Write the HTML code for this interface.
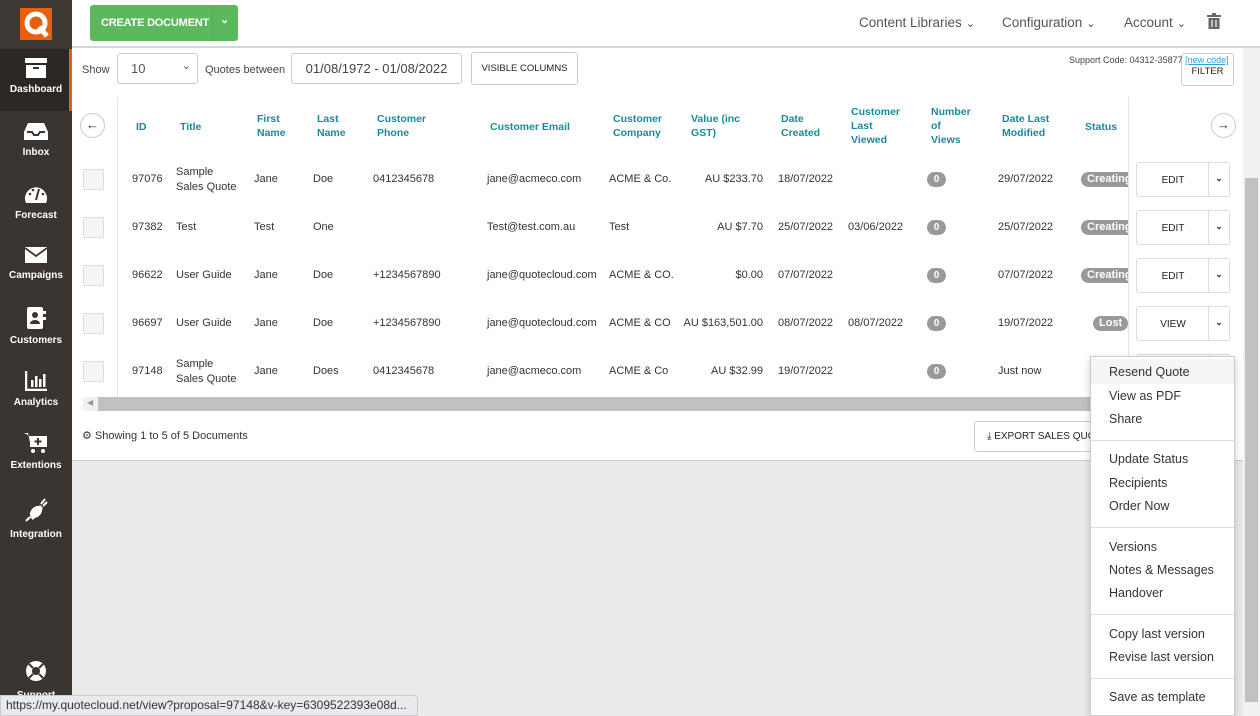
<!DOCTYPE html><html><head><meta charset="utf-8"><style>
*{box-sizing:border-box;margin:0;padding:0}
body{width:1260px;height:716px;overflow:hidden;background:#ebebeb;font-family:"Liberation Sans",sans-serif;font-size:11px;color:#333;position:relative}
.a{position:absolute;white-space:nowrap}
#side{position:absolute;left:0;top:0;width:72px;height:716px;background:#3a3531}
.nav{position:absolute;left:0;width:72px;text-align:center;color:#fff;font-size:10px;font-weight:bold}
.nav svg{display:block;margin:0 auto 6px}
#top{position:absolute;left:72px;top:0;width:1188px;height:48px;background:#fff;border-bottom:2px solid #d5d5d5}
#panel{position:absolute;left:72px;top:48px;width:1171px;height:413px;background:#fff;border-bottom:1px solid #ccc}
.h{color:#1a8a9a;font-weight:bold;font-size:10.5px;line-height:14px}
.cb{position:absolute;left:83px;width:21px;height:21px;border:1px solid #ddd;background:#f5f5f5;border-radius:2px}
.badge{position:absolute;width:19px;height:15px;border-radius:8px;background:#999;color:#fff;font-weight:bold;font-size:10px;text-align:center;line-height:15px}
.st{position:absolute;height:15px;border-radius:8px;background:#999;color:#fff;font-weight:bold;font-size:11px;line-height:15px;padding:0 6px}
.btn{position:absolute;left:1136px;width:94px;height:35px;border:1px solid #ddd;border-radius:3px;background:#fff}
.btn span{position:absolute;left:0;width:72px;top:10px;text-align:center;font-size:10px;color:#222}
.btn i{position:absolute;left:71px;top:0;width:1px;height:33px;background:#ddd}
.btn b{position:absolute;left:72px;width:20px;top:8px;text-align:center;font-size:9px}
.menu{position:absolute;left:1090px;top:356px;width:145px;height:360px;background:#fff;border:1px solid #ccc;box-shadow:0 3px 8px rgba(0,0,0,.2);font-size:12.5px;color:#333}
.menu div{position:absolute;left:18px}
.menu hr{position:absolute;left:0;width:143px;border:0;border-top:1px solid #ddd}
</style></head><body>
<div id="side">
<div class="a" style="left:0;top:0;width:72px;height:48px;background:#3e3935"></div>
<div class="a" style="left:20px;top:8px;width:32px;height:32px;background:#e8600c"></div>
<svg class="a" style="left:20px;top:8px" width="32" height="32"><circle cx="16" cy="15" r="9" fill="none" stroke="#fff" stroke-width="5"/><path d="M19 19 L27 28" stroke="#fff" stroke-width="5"/></svg>
<div class="a" style="left:0;top:49px;width:72px;height:62px;background:#2b2725;border-right:3px solid #e8600c"></div>
<div class="nav" style="top:58px"><svg width="22" height="20"><rect x="0" y="0" width="22" height="5" fill="#fff"/><rect x="1" y="7" width="20" height="13" fill="#fff"/><rect x="8" y="9" width="6" height="2" fill="#333"/></svg>Dashboard</div>
<div class="nav" style="top:121px"><svg width="24" height="20"><path d="M4 2h16l4 9v8H0v-8z" fill="#fff"/><path d="M3 11h5l2 3h4l2-3h5" stroke="#3a3531" stroke-width="2" fill="none"/></svg>Inbox</div>
<div class="nav" style="top:184px"><svg width="24" height="20"><path d="M2 19A11 11 0 1 1 22 19z" fill="#fff"/><path d="M12 16L15 5" stroke="#3a3531" stroke-width="2"/><circle cx="6" cy="10" r="1.3" fill="#3a3531"/><circle cx="9" cy="6" r="1.3" fill="#3a3531"/><circle cx="19" cy="10" r="1.3" fill="#3a3531"/></svg>Forecast</div>
<div class="nav" style="top:246px"><svg width="22" height="18"><rect x="0" y="1" width="22" height="16" fill="#fff"/><path d="M0 2l11 8 11-8" stroke="#3a3531" stroke-width="1.8" fill="none"/></svg>Campaigns</div>
<div class="nav" style="top:307px"><svg width="20" height="22"><rect x="1" y="0" width="16" height="22" rx="2" fill="#fff"/><rect x="17" y="4" width="3" height="3" fill="#fff"/><rect x="17" y="10" width="3" height="3" fill="#fff"/><circle cx="9" cy="8" r="3" fill="#3a3531"/><path d="M4 17a5 4 0 0 1 10 0z" fill="#3a3531"/></svg>Customers</div>
<div class="nav" style="top:371px"><svg width="22" height="20"><path d="M1 0v19h21" stroke="#fff" stroke-width="2.5" fill="none"/><rect x="6" y="9" width="2.5" height="7" fill="#fff"/><rect x="10" y="5" width="2.5" height="11" fill="#fff"/><rect x="14" y="8" width="2.5" height="8" fill="#fff"/><rect x="18" y="3" width="2.5" height="13" fill="#fff"/></svg>Analytics</div>
<div class="nav" style="top:432px"><svg width="24" height="22"><path d="M0 1h4l3 14h14l2-11H6" fill="#fff"/><rect x="6" y="4" width="17" height="11" fill="#fff"/><circle cx="9" cy="19" r="2" fill="#fff"/><circle cx="19" cy="19" r="2" fill="#fff"/><path d="M14 6v7M10.5 9.5h7" stroke="#3a3531" stroke-width="2"/></svg>Extentions</div>
<div class="nav" style="top:497px"><svg width="24" height="26"><path d="M6 20L16 8l3 3-10 12z" fill="#fff"/><ellipse cx="12" cy="15" rx="7" ry="5" transform="rotate(-45 12 15)" fill="#fff"/><path d="M17 7l4-5M19 9l4-4M6 20l-4 4" stroke="#fff" stroke-width="2"/></svg>Integration</div>
<svg class="a" style="left:25px;top:660px" width="22" height="22"><circle cx="11" cy="11" r="10" fill="#fff"/><circle cx="11" cy="11" r="4" fill="#3a3531"/><path d="M4 4l4 4M18 4l-4 4M4 18l4-4M18 18l-4-4" stroke="#3a3531" stroke-width="2"/></svg>
<div class="nav" style="top:690px">Support</div>
</div>
<div id="top">
<div class="a" style="left:18px;top:5px;width:148px;height:36px;background:#5cb85c;border-radius:3px;color:#fff;font-weight:bold;font-size:11px;line-height:36px;padding-left:11px;letter-spacing:-.2px">CREATE DOCUMENT</div>
<div class="a" style="left:140px;top:5px;width:1px;height:36px;background:#53a853"></div>
<div class="a" style="left:148px;top:13px;color:#fff;font-size:11px;font-weight:bold">&#8964;</div>
<div class="a" style="left:787px;top:15px;font-size:13.5px;color:#555">Content Libraries <small>&#8964;</small></div>
<div class="a" style="left:930px;top:15px;font-size:13.5px;color:#555">Configuration <small>&#8964;</small></div>
<div class="a" style="left:1052px;top:15px;font-size:13.5px;color:#555">Account <small>&#8964;</small></div>
<svg class="a" style="left:1135px;top:13px" width="14" height="16"><rect x="0" y="2" width="14" height="2" fill="#666"/><rect x="5" y="0" width="4" height="2" fill="#666"/><rect x="1.5" y="5" width="11" height="11" fill="#666"/><path d="M5 7v7M9 7v7" stroke="#fff" stroke-width="1.2"/></svg>
</div>
<div id="panel"></div>
<div class="a" style="left:82px;top:64px;color:#444">Show</div>
<div class="a" style="left:117px;top:53px;width:81px;height:31px;border:1px solid #ccc;border-radius:3px;font-size:13px;color:#555;padding:7px 0 0 13px">10<span style="position:absolute;right:6px;top:5px;font-size:11px">&#8964;</span></div>
<div class="a" style="left:205px;top:64px;color:#444">Quotes between</div>
<div class="a" style="left:291px;top:53px;width:171px;height:31px;border:1px solid #ccc;border-radius:3px;font-size:13px;color:#444;text-align:center;line-height:29px">01/08/1972 - 01/08/2022</div>
<div class="a" style="left:471px;top:52px;width:107px;height:33px;border:1px solid #ccc;border-radius:3px;font-size:9.5px;color:#222;text-align:center;line-height:31px">VISIBLE COLUMNS</div>
<div class="a" style="left:1181px;top:53px;width:53px;height:33px;border:1px solid #ccc;border-radius:3px;font-size:9.5px;color:#222;text-align:center;padding-top:12px">FILTER</div>
<div class="a" style="left:1069px;top:55px;font-size:9px;color:#444">Support Code: 04312-35877 <span style="color:#2aa3d8;text-decoration:underline">[new code]</span></div>
<div class="a" style="left:117px;top:97px;width:1px;height:300px;background:#e5e5e5"></div>
<div class="a" style="left:1128px;top:97px;width:1px;height:300px;background:#e5e5e5"></div>
<div class="a" style="left:80px;top:113px;width:25px;height:25px;border:1px solid #ccc;border-radius:50%;text-align:center;line-height:22px;font-size:13px">&#8592;</div>
<div class="a" style="left:1211px;top:113px;width:25px;height:25px;border:1px solid #ccc;border-radius:50%;text-align:center;line-height:22px;font-size:13px">&#8594;</div>
<div class="a h" style="left:136px;top:120px">ID</div>
<div class="a h" style="left:180px;top:120px">Title</div>
<div class="a h" style="left:257px;top:112px">First<br>Name</div>
<div class="a h" style="left:317px;top:112px">Last<br>Name</div>
<div class="a h" style="left:377px;top:112px">Customer<br>Phone</div>
<div class="a h" style="left:490px;top:120px">Customer Email</div>
<div class="a h" style="left:613px;top:112px">Customer<br>Company</div>
<div class="a h" style="left:691px;top:112px">Value (inc<br>GST)</div>
<div class="a h" style="left:781px;top:112px">Date<br>Created</div>
<div class="a h" style="left:851px;top:105px">Customer<br>Last<br>Viewed</div>
<div class="a h" style="left:931px;top:105px">Number<br>of<br>Views</div>
<div class="a h" style="left:1002px;top:112px">Date Last<br>Modified</div>
<div class="a h" style="left:1085px;top:120px">Status</div>
<div style="position:absolute;left:0;top:0;width:1260px;height:716px;pointer-events:none;line-height:15px;color:#333">
<div class="cb" style="top:169px"></div>
<div class="a" style="left:132px;top:172px">97076</div><div class="a" style="left:176px;top:165px">Sample<br>Sales Quote</div><div class="a" style="left:254px;top:172px">Jane</div><div class="a" style="left:313px;top:172px">Doe</div><div class="a" style="left:373px;top:172px">0412345678</div><div class="a" style="left:487px;top:172px">jane@acmeco.com</div><div class="a" style="left:609px;top:172px">ACME &amp; Co.</div><div class="a" style="right:497px;top:172px">AU $233.70</div><div class="a" style="left:778px;top:172px">18/07/2022</div>
<div class="badge" style="left:927px;top:172px">0</div><div class="a" style="left:998px;top:172px">29/07/2022</div><div class="st" style="left:1081px;top:172px;width:47px;overflow:hidden;border-radius:8px 0 0 8px">Creating</div>
<div class="btn" style="top:162px"><span>EDIT</span><i></i><b>&#8964;</b></div>
<div class="cb" style="top:217px"></div>
<div class="a" style="left:132px;top:220px">97382</div><div class="a" style="left:176px;top:220px">Test</div><div class="a" style="left:254px;top:220px">Test</div><div class="a" style="left:313px;top:220px">One</div><div class="a" style="left:487px;top:220px">Test@test.com.au</div><div class="a" style="left:609px;top:220px">Test</div><div class="a" style="right:497px;top:220px">AU $7.70</div><div class="a" style="left:778px;top:220px">25/07/2022</div><div class="a" style="left:848px;top:220px">03/06/2022</div>
<div class="badge" style="left:927px;top:220px">0</div><div class="a" style="left:998px;top:220px">25/07/2022</div><div class="st" style="left:1081px;top:220px;width:47px;overflow:hidden;border-radius:8px 0 0 8px">Creating</div>
<div class="btn" style="top:210px"><span>EDIT</span><i></i><b>&#8964;</b></div>
<div class="cb" style="top:265px"></div>
<div class="a" style="left:132px;top:268px">96622</div><div class="a" style="left:176px;top:268px">User Guide</div><div class="a" style="left:254px;top:268px">Jane</div><div class="a" style="left:313px;top:268px">Doe</div><div class="a" style="left:373px;top:268px">+1234567890</div><div class="a" style="left:487px;top:268px">jane@quotecloud.com</div><div class="a" style="left:609px;top:268px">ACME &amp; CO.</div><div class="a" style="right:497px;top:268px">$0.00</div><div class="a" style="left:778px;top:268px">07/07/2022</div>
<div class="badge" style="left:927px;top:268px">0</div><div class="a" style="left:998px;top:268px">07/07/2022</div><div class="st" style="left:1081px;top:268px;width:47px;overflow:hidden;border-radius:8px 0 0 8px">Creating</div>
<div class="btn" style="top:258px"><span>EDIT</span><i></i><b>&#8964;</b></div>
<div class="cb" style="top:313px"></div>
<div class="a" style="left:132px;top:316px">96697</div><div class="a" style="left:176px;top:316px">User Guide</div><div class="a" style="left:254px;top:316px">Jane</div><div class="a" style="left:313px;top:316px">Doe</div><div class="a" style="left:373px;top:316px">+1234567890</div><div class="a" style="left:487px;top:316px">jane@quotecloud.com</div><div class="a" style="left:609px;top:316px">ACME &amp; CO</div><div class="a" style="right:497px;top:316px">AU $163,501.00</div><div class="a" style="left:778px;top:316px">08/07/2022</div><div class="a" style="left:848px;top:316px">08/07/2022</div>
<div class="badge" style="left:927px;top:316px">0</div><div class="a" style="left:998px;top:316px">19/07/2022</div><div class="st" style="left:1093px;top:316px">Lost</div>
<div class="btn" style="top:306px"><span>VIEW</span><i></i><b>&#8964;</b></div>
<div class="cb" style="top:361px"></div>
<div class="a" style="left:132px;top:364px">97148</div><div class="a" style="left:176px;top:357px">Sample<br>Sales Quote</div><div class="a" style="left:254px;top:364px">Jane</div><div class="a" style="left:313px;top:364px">Does</div><div class="a" style="left:373px;top:364px">0412345678</div><div class="a" style="left:487px;top:364px">jane@acmeco.com</div><div class="a" style="left:609px;top:364px">ACME &amp; Co</div><div class="a" style="right:497px;top:364px">AU $32.99</div><div class="a" style="left:778px;top:364px">19/07/2022</div>
<div class="badge" style="left:927px;top:364px">0</div><div class="a" style="left:998px;top:364px">Just now</div>
<div class="btn" style="top:354px"><span></span><i></i></div>
</div>
<div class="a" style="left:83px;top:397px;width:1045px;height:14px;background:#f1f1f1"></div>
<div class="a" style="left:98px;top:397px;width:1030px;height:14px;background:#c1c1c1"></div>
<div class="a" style="left:87px;top:398px;font-size:8px;color:#999">&#9664;</div>
<div class="a" style="left:82px;top:429px;color:#333">&#9881; Showing 1 to 5 of 5 Documents</div>
<div class="a" style="left:974px;top:421px;width:130px;height:31px;border:1px solid #ccc;border-radius:3px;font-size:10px;color:#222;padding:9px 0 0 12px">&#10515; EXPORT SALES QUOTES</div>
<div class="a" style="left:1243px;top:48px;width:17px;height:668px;background:#f1f1f1"></div>
<div class="a" style="left:1245px;top:178px;width:13px;height:524px;background:#c1c1c1"></div>
<div class="menu">
<div style="left:0;top:2px;width:143px;height:25px;background:#f5f5f5"></div>
<div style="top:8px">Resend Quote</div><div style="top:32px">View as PDF</div><div style="top:55px">Share</div>
<hr style="top:83px">
<div style="top:95px">Update Status</div><div style="top:119px">Recipients</div><div style="top:142px">Order Now</div>
<hr style="top:170px">
<div style="top:183px">Versions</div><div style="top:206px">Notes &amp; Messages</div><div style="top:229px">Handover</div>
<hr style="top:257px">
<div style="top:270px">Copy last version</div><div style="top:293px">Revise last version</div>
<hr style="top:321px">
<div style="top:333px">Save as template</div>
</div>
<div class="a" style="left:0;top:695px;width:418px;height:21px;background:#e8eaed;border:1px solid #ccc;border-radius:0 4px 0 0;font-size:12px;color:#333;padding:2px 0 0 5px">https://my.quotecloud.net/view?proposal=97148&amp;v-key=6309522393e08d...</div>
</body></html>
